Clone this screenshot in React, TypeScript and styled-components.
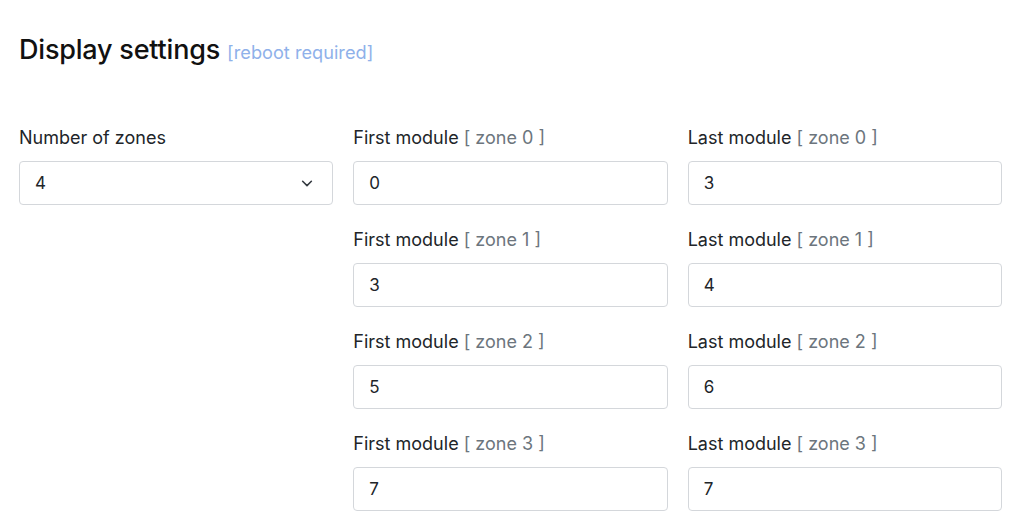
import styled, { createGlobalStyle } from "styled-components";

const GlobalStyle = createGlobalStyle`
    body {
        margin: 0;
        background: #ffffff;
        font-family: Inter, "Liberation Sans", Arial, sans-serif;
        color: #212529;
    }
`;

const zones = [
    { first: "0", last: "3" },
    { first: "3", last: "4" },
    { first: "5", last: "6" },
    { first: "7", last: "7" },
];

const App = () => {
    return (
        <Page>
            <GlobalStyle />
            <Title>
                Display settings <Hint>[reboot required]</Hint>
            </Title>
            <FormGrid>
                {zones.map((z, i) => (
                    <Row key={i}>
                        <Field>
                            {i === 0 && (
                                <>
                                    <Label>Number of zones</Label>
                                    <SelectBox>
                                        <span>4</span>
                                        <svg width="14" height="14" viewBox="0 0 16 16">
                                            <path d="M3 6l5 5 5-5" fill="none" stroke="#343a40" strokeWidth="1.8" strokeLinecap="round" strokeLinejoin="round" />
                                        </svg>
                                    </SelectBox>
                                </>
                            )}
                        </Field>
                        <Field>
                            <Label>
                                First module <Zone>[ zone {i} ]</Zone>
                            </Label>
                            <Input defaultValue={z.first} />
                        </Field>
                        <Field>
                            <Label>
                                Last module <Zone>[ zone {i} ]</Zone>
                            </Label>
                            <Input defaultValue={z.last} />
                        </Field>
                    </Row>
                ))}
            </FormGrid>
        </Page>
    );
};

export default App;

const Page = styled.div`
    padding: 34px 22px 0 19px;
`;

const Title = styled.h2`
    margin: 0 0 57px;
    font-size: 27px;
    font-weight: 500;
    line-height: 32px;
    letter-spacing: -0.2px;
    color: #111;
`;

const Hint = styled.span`
    font-size: 18.2px;
    font-weight: 400;
    letter-spacing: 0;
    color: #8fb1ea;
`;

const FormGrid = styled.div`
    display: flex;
    flex-direction: column;
    gap: 22px;
`;

const Row = styled.div`
    display: grid;
    grid-template-columns: repeat(3, 1fr);
    column-gap: 20px;
`;

const Field = styled.div`
    display: flex;
    flex-direction: column;
`;

const Label = styled.label`
    font-size: 18px;
    line-height: 26px;
    margin-bottom: 10px;
    color: #212529;
`;

const Zone = styled.span`
    color: #6c757d;
`;

const Input = styled.input`
    box-sizing: border-box;
    height: 44px;
    padding: 0 15px;
    font-family: Inter, "Liberation Sans", Arial, sans-serif;
    font-size: 17px;
    color: #212529;
    border: 1px solid #d4d7db;
    border-radius: 4px;
    outline: none;
`;

const SelectBox = styled.div`
    box-sizing: border-box;
    height: 44px;
    padding: 0 18px 0 15px;
    display: flex;
    align-items: center;
    justify-content: space-between;
    font-size: 17px;
    border: 1px solid #d4d7db;
    border-radius: 4px;
`;
